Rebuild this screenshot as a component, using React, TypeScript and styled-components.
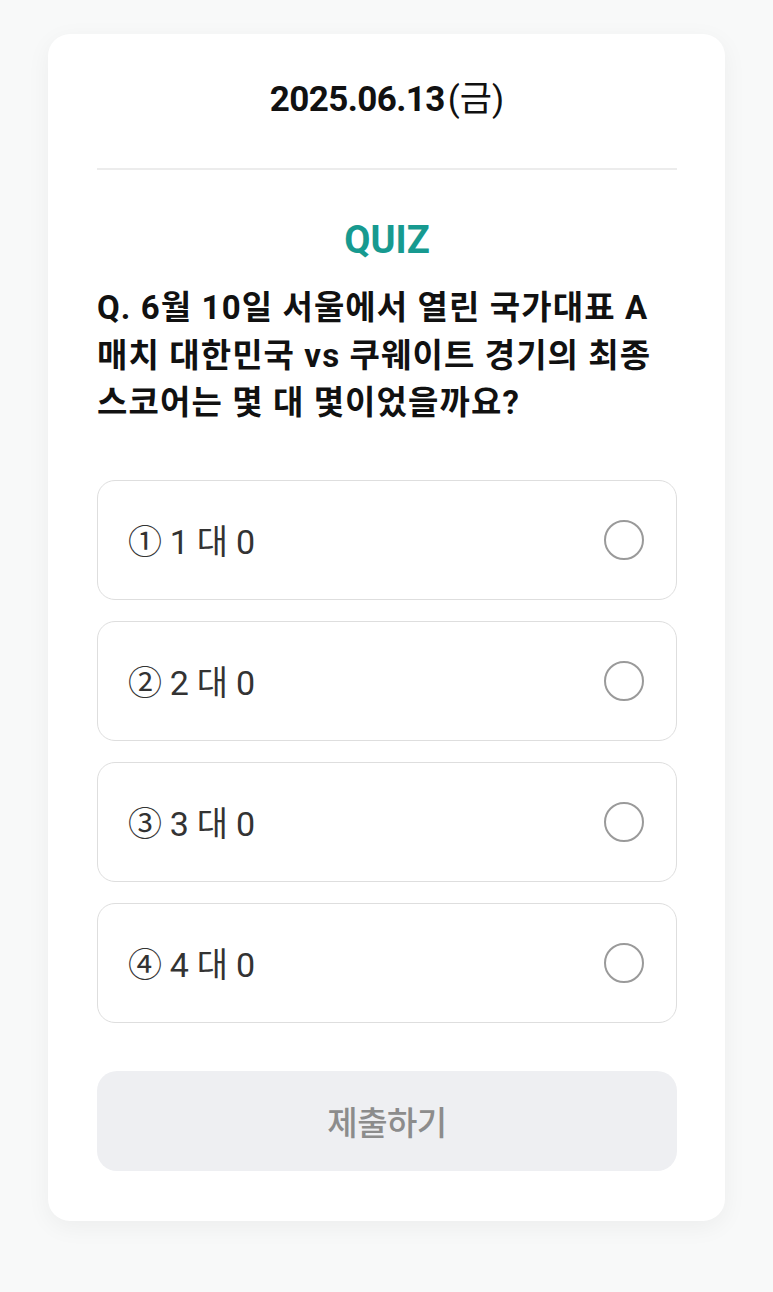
import React from "react";
import styled, { createGlobalStyle } from "styled-components";

const Global = createGlobalStyle`
  html, body { margin: 0; padding: 0; background: #f8f9f9; }
  body { font-family: Roboto, "Noto Sans CJK KR", sans-serif; }
  * { box-sizing: border-box; }
`;

const Page = styled.div`
  min-height: 1292px;
  padding: 34px 48px 40px 48px;
  background: #f8f9f9;
`;

const Card = styled.div`
  background: #ffffff;
  border-radius: 22px;
  box-shadow: 0 6px 24px rgba(0, 0, 0, 0.05);
  padding: 44px 48px 50px 49px;
  display: flex;
  flex-direction: column;
`;

const DateText = styled.div`
  text-align: center;
  font-family: Roboto, "Noto Sans CJK KR", sans-serif;
  font-size: 35px;
  font-weight: 700;
  letter-spacing: -0.6px;
  color: #111;
  line-height: 44px;
  span {
    font-weight: 400;
    letter-spacing: 0;
    margin-left: 3px;
  }
`;

const Divider = styled.hr`
  border: none;
  height: 2px;
  background: #ececec;
  margin: 46px 0 0 0;
`;

const QuizLabel = styled.div`
  margin-top: 48px;
  text-align: center;
  color: #179a90;
  font-family: Roboto, sans-serif;
  font-weight: 700;
  font-size: 38px;
  line-height: 44px;
`;

const Question = styled.div`
  margin-top: 22px;
  font-family: Roboto, "Noto Sans CJK KR", sans-serif;
  font-weight: 700;
  font-size: 33px;
  line-height: 47.5px;
  color: #111;
  letter-spacing: 1.1px;
  white-space: nowrap;
`;

const Options = styled.div`
  margin-top: 53px;
  display: flex;
  flex-direction: column;
  gap: 21px;
`;

const Option = styled.div`
  height: 120px;
  border: 1.5px solid #dedede;
  border-radius: 18px;
  display: flex;
  align-items: center;
  justify-content: space-between;
  padding: 0 32px 0 30px;
  background: #fff;
`;

const OptionText = styled.div`
  font-family: Roboto, "Noto Sans CJK KR", sans-serif;
  font-size: 34px;
  font-weight: 400;
  color: #333;
  letter-spacing: -0.3px;
`;

const Radio = styled.div`
  width: 40px;
  height: 40px;
  border-radius: 50%;
  border: 2px solid #9a9a9a;
`;

const Submit = styled.button`
  margin-top: 48px;
  height: 100px;
  border: none;
  border-radius: 20px;
  background: #eeeff2;
  color: #8c8c8c;
  font-family: Roboto, "Noto Sans CJK KR", sans-serif;
  font-size: 33px;
  font-weight: 500;
  letter-spacing: -0.5px;
  width: 100%;
`;

const options = ["① 1 대 0", "② 2 대 0", "③ 3 대 0", "④ 4 대 0"];

export default function App() {
  return (
    <>
      <Global />
      <Page>
        <Card>
          <DateText>
            2025.06.13<span>(금)</span>
          </DateText>
          <Divider />
          <QuizLabel>QUIZ</QuizLabel>
          <Question>
            Q. 6월 10일 서울에서 열린 국가대표 A
            <br />
            매치 대한민국 vs 쿠웨이트 경기의 최종
            <br />
            스코어는 몇 대 몇이었을까요?
          </Question>
          <Options>
            {options.map((o) => (
              <Option key={o}>
                <OptionText>{o}</OptionText>
                <Radio />
              </Option>
            ))}
          </Options>
          <Submit>제출하기</Submit>
        </Card>
      </Page>
    </>
  );
}
